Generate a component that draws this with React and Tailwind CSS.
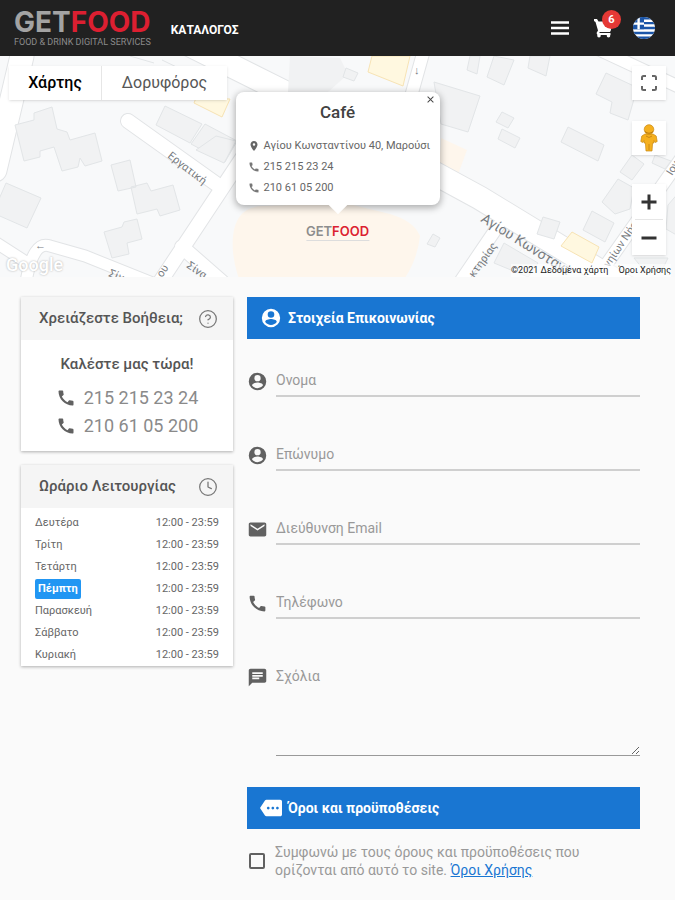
import { Clock, CircleHelp } from 'lucide-react'
import { MdCall, MdChat, MdClose, MdEmail, MdMore, MdPlace } from 'react-icons/md'

const AccountIcon = ({ size }) => (
  <svg viewBox="0 0 24 24" width={size} height={size} fill="currentColor" fillRule="evenodd">
    <path d="M12 2a10 10 0 1 1 0 20 10 10 0 0 1 0-20zM12 4.600a3.600 3.600 0 1 0 0 7.200 3.600 3.600 0 0 0 0-7.200zM12 13.200c-2.300 0-6.300 1-6.300 3.200 1.400 1.900 3.700 3.200 6.300 3.200s4.900-1.300 6.300-3.200c0-2.200-4-3.200-6.300-3.200z" />
  </svg>
)

const phones = ['215 215 23 24', '210 61 05 200']

const days = ['Δευτέρα', 'Τρίτη', 'Τετάρτη', 'Πέμπτη', 'Παρασκευή', 'Σάββατο', 'Κυριακή']
const today = 'Πέμπτη'

const fields = [
  { id: 'firstName', label: 'Ονομα', type: 'text', Icon: AccountIcon },
  { id: 'lastName', label: 'Επώνυμο', type: 'text', Icon: AccountIcon },
  { id: 'email', label: 'Διεύθυνση Email', type: 'email', Icon: MdEmail },
  { id: 'phone', label: 'Τηλέφωνο', type: 'tel', Icon: MdCall },
]

const MenuIcon = () => (
  <svg viewBox="0 0 18 14" className="h-[14px] w-[18px]" stroke="currentColor" strokeWidth="2.600">
    <path d="M0 1.500h18M0 7h18M0 12.500h18" />
  </svg>
)

const CartIcon = () => (
  <svg viewBox="0 0 20 20" className="h-5 w-5 text-white" fill="currentColor">
    <path d="M1 1h3l1.5 2.5H18v8.5l-1 2H7l-1 1h11.500v2H4.500L3.500 15l1.500-2.500L2.500 4 1 3z" />
    <circle cx="6" cy="17.800" r="1.800" />
    <circle cx="15.500" cy="17.800" r="1.800" />
  </svg>
)

const GreekFlag = () => (
  <svg viewBox="0 0 22 22" className="h-[22px] w-[22px]">
    <clipPath id="flag">
      <circle cx="11" cy="11" r="11" />
    </clipPath>
    <g clipPath="url(#flag)">
      <rect width="22" height="22" fill="#fff" />
      <path
        d="M0 1.200h22M0 6.100h22M0 11h22M0 15.900h22M0 20.800h22"
        stroke="#1b55a8"
        strokeWidth="2.450"
      />
      <rect width="11" height="12.200" fill="#1b55a8" />
      <path d="M0 6.600h11M5.600 0v12.200" stroke="#fff" strokeWidth="2.400" />
    </g>
  </svg>
)

const Pegman = () => (
  <svg viewBox="0 0 18 28" className="h-7 w-[18px]">
    <path
      d="M5 10h8l3.200 2 1 5.500-2 1-1.200-2v2.500h-1.400L12 27H6l-.600-8H4v-2.500l-1.200 2-2-1 1-5.500z"
      fill="#f5b01f"
      stroke="#c98a16"
      strokeWidth=".7"
    />
    <path d="M6 12l3 1.500 3-1.500M9 20v6" fill="none" stroke="#c98a16" />
    <circle cx="9" cy="5.500" r="4.800" fill="#f5b01f" stroke="#c98a16" strokeWidth=".7" />
    <path d="M5 7.500q4 3.500 8 0" fill="none" stroke="#b87c12" />
  </svg>
)

const MapDrawing = () => (
  <svg
    viewBox="0 56 675 221"
    preserveAspectRatio="xMidYMid slice"
    className="absolute inset-0 h-full w-full"
    fontFamily="Roboto, sans-serif"
  >
    <rect y="56" width="675" height="221" fill="#f8f9fa" />

    {/* business area */}
    <path
      d="M233 236Q236 207 262 206L345 203 390 214Q414 221 420 236Q417 262 402 282H240Q231 258 233 236z"
      fill="#fef6ec"
    />
    <path d="M441 138l26 12-10 27-18-8z" fill="#fef6ec" />

    {/* streets */}
    <g fill="none" stroke="#e2e4e6" strokeLinecap="round">
      <path d="M-5 170L22 56M180 40L296 98 480 198 690 326" strokeWidth="25" />
      <path d="M128 121L222 188M266 122L160 282M182 247L222 282" strokeWidth="16" />
      <path d="M26 282Q33 240 50 246L85 256 170 290M-5 242L26 262" strokeWidth="13" />
      <path d="M424 50L410 100M498 226L460 282M680 160L594 282M600 50L690 92" strokeWidth="14" />
    </g>
    <g fill="none" stroke="#fff" strokeLinecap="round">
      <path d="M-5 170L22 56M180 40L296 98 480 198 690 326" strokeWidth="23" />
      <path d="M128 121L222 188M266 122L160 282M182 247L222 282" strokeWidth="14" />
      <path d="M26 282Q33 240 50 246L85 256 170 290M-5 242L26 262" strokeWidth="11" />
      <path d="M424 50L410 100M498 226L460 282M680 160L594 282M600 50L690 92" strokeWidth="12" />
    </g>

    {/* buildings */}
    <g fill="#f1f2f3" stroke="#e2e5e7">
      <path d="M34 113l18-6 5 22 10 3 3 8 25-7 7 28-17 5-5-8-2 9-16 4-8-24-14 4 0 6-16 4-9-36 19-5z" />
      <path d="M165 106l37 18-12 19-34-18zM205 124l32 17-12 21-34-18z" />
      <path d="M111 165l19-5 6 27-18 4zM131 187l16-4 4 8 22-6 7 25-20 6-3-7-20 5z" />
      <path d="M104 232l18-5 2-5 13-3 5 20-15 4 2 11-17 4z" />
      <path d="M6 183l35 15-14 30-34-15z" />
      <path d="M290 56l50 2 8 16-20 18h-40z" stroke="none" />
      <path d="M346 68l12 5-4 8-11-4zM130 56l24 7M162 60l60 29" />
      <path d="M470 56h10l-3 18-10-4zM494 56l20 4-10 25-17-8zM530 56h20l-4 20-18-8z" />
      <path d="M434 82l46 14-12 36-27-8z" />
      <path d="M502 112l12 6-6 10-12-6zM502 129l18 9-5 10-17-9z" />
      <path d="M606 73l30 14-2 12-6 21-18-7 2-11-16-8z" />
      <path d="M568 127l36 18-6 16-37-19z" />
      <path d="M196 150l20-14 20 5-12 22z" />
      <path d="M632 155l12 9-12 16-12-8zM618 179l16 9-4 21-15 5-13-12z" />
      <path d="M592 211l22 12-9 19-22-12zM543 217l17 5-6 17-17-5z" />
      <path d="M433 234l7 4-5 9-8-3zM504 243l34 20-10 14-34-14z" />
      <path d="M655 155l16 6-6 8-13-6zM668 205l12-14v46l-14-8zM634 258h34l-5 10-16 6z" />
    </g>
    <path d="M372 56h38l-7 30-35-14z" fill="#fff8e0" stroke="#f7e3b4" />
    <path d="M196 98l34 1-8 18-28-14z" fill="#fff8e0" stroke="#f7e3b4" />
    <path d="M572 232l27 15-7 16-31-17z" fill="#fff8e0" stroke="#f7e3b4" />

    {/* street names */}
    <g fill="#777b7f" fontSize="11">
      <text transform="translate(167 157) rotate(38)">Εργατική</text>
      <text x="480" y="221" fontSize="14" transform="rotate(32 480 221)">Αγίου Κωνσταντ</text>
      <text transform="translate(474 278) rotate(-54)">κτηρίας</text>
      <text transform="translate(609 268) rotate(-56)">νηίων Νήσων</text>
      <text transform="translate(672 176) rotate(-58)">Ιον</text>
      <text transform="translate(186 267) rotate(35)">Σίνα</text>
      <text transform="translate(108 276) rotate(22)">Σίνα</text>
      <text transform="translate(162 278) rotate(-55)">ου</text>
      <text x="414" y="74">↓</text>
      <text x="35" y="249">←</text>
    </g>
  </svg>
)

const Header = () => (
  <header className="flex h-14 items-center bg-[#212121] pl-[14px] pr-5">
    <a href="#home" className="whitespace-nowrap">
      <span className="block font-['Inter'] text-[28px] font-bold leading-7 text-[#a3a3a3]">
        GET<span className="text-[#dc1f31]">FOOD</span>
      </span>
      <span className="block text-[9px] leading-3 text-[#8b8b8b]">
        FOOD &amp; DRINK DIGITAL SERVICES
      </span>
    </a>
    <a href="#catalog" className="ml-5 mt-1 text-[12px] font-bold text-white">
      ΚΑΤΑΛΟΓΟΣ
    </a>
    <div className="ml-auto flex items-center gap-5">
      <button aria-label="Μενού" className="mr-1 text-white">
        <MenuIcon />
      </button>
      <button aria-label="Καλάθι" className="relative">
        <CartIcon />
        <span className="absolute -right-2 -top-2 h-[19px] w-[19px] rounded-full bg-[#e53935] text-center text-[11px] font-bold leading-[19px] text-white">
          6
        </span>
      </button>
      <button aria-label="Γλώσσα">
        <GreekFlag />
      </button>
    </div>
  </header>
)

const InfoWindow = () => (
  <div className="absolute left-1/2 top-9 h-[113px] w-[204px] -translate-x-1/2 rounded-lg bg-white px-3 pt-2 shadow-[0_2px_7px_1px_rgba(0,0,0,0.3)]">
    <div className="absolute -bottom-[6px] left-1/2 h-4 w-4 -translate-x-1/2 rotate-45 bg-white" />
    <button aria-label="Κλείσιμο" className="absolute right-1 top-[2px] text-[#444]">
      <MdClose size={11} />
    </button>
    <h2 className="text-center text-[17px] font-medium leading-6 text-[#424242]">Café</h2>
    <ul className="relative mt-[11px] text-[11px] leading-[21px] text-[#666]">
      <li className="flex items-center gap-1 whitespace-nowrap">
        <MdPlace size={12} className="shrink-0" />
        Αγίου Κωνσταντίνου 40, Μαρούσι
      </li>
      {phones.map((phone) => (
        <li key={phone} className="flex items-center gap-1">
          <MdCall size={12} className="text-[#777]" />
          {phone}
        </li>
      ))}
    </ul>
  </div>
)

const StoreMap = () => (
  <section className="relative h-[221px] overflow-hidden">
    <MapDrawing />
    <div className="absolute left-[9px] top-[10px] flex bg-white text-[16px] leading-[34px] shadow">
      <button className="w-[93px] border-r border-[#e6e6e6] font-medium text-black">Χάρτης</button>
      <button className="w-[125px] text-[#565656]">Δορυφόρος</button>
    </div>
    <InfoWindow />
    <div className="absolute left-1/2 top-[166px] -translate-x-1/2 border-b border-[#ddd] font-['Inter'] text-[13px] font-semibold leading-[18px] text-[#8d8d8d]">
      GET<span className="text-[#dc1f31]">FOOD</span>
    </div>
    <div className="absolute right-[9px] top-[10px] flex flex-col text-[#666]">
      <button
        aria-label="Πλήρης οθόνη"
        className="flex h-[34px] w-[34px] items-center justify-center bg-white shadow"
      >
        <svg viewBox="0 0 16 16" className="h-4 w-4" fill="none" stroke="currentColor" strokeWidth="2">
          <path d="M1 5V2.500Q1 1 2.500 1H5M11 1h2.500Q15 1 15 2.500V5M15 11v2.500q0 1.500-1.500 1.500H11M5 15H2.500Q1 15 1 13.500V11" />
        </svg>
      </button>
      <button
        aria-label="Street View"
        className="mt-[21px] flex h-[34px] w-[34px] items-center justify-center bg-white shadow"
      >
        <Pegman />
      </button>
      <div className="mt-[29px] flex flex-col items-center bg-white text-[#333] shadow">
        <button aria-label="Μεγέθυνση" className="flex h-[35px] w-[34px] items-center justify-center">
          <svg viewBox="0 0 16 16" className="h-4 w-4" stroke="currentColor" strokeWidth="3">
            <path d="M0.500 8h15M8 0.500v15" />
          </svg>
        </button>
        <span className="h-px w-7 bg-[#e6e6e6]" />
        <button aria-label="Σμίκρυνση" className="flex h-[35px] w-[34px] items-center justify-center">
          <svg viewBox="0 0 16 16" className="h-4 w-4" stroke="currentColor" strokeWidth="3">
            <path d="M0.500 8h15" />
          </svg>
        </button>
      </div>
    </div>
    <span className="absolute bottom-0 left-[6px] text-[18px] font-medium leading-6 text-white [text-shadow:0_0_2px_#aaa]">
      Google
    </span>
    <div className="absolute bottom-0 right-1 flex gap-[10px] bg-white/60 text-[9px] leading-[13px] text-[#222]">
      <span>©2021 Δεδομένα χάρτη</span>
      <a href="#map-terms">Όροι Χρήσης</a>
    </div>
  </section>
)

const Card = ({ title, Icon, children }) => (
  <section className="bg-white shadow-[0_1px_3px_rgba(0,0,0,0.3)]">
    <div className="flex h-[43px] items-center justify-between bg-[#f5f5f5] pl-[18px] pr-[15px] text-[#555]">
      <h3 className="whitespace-nowrap text-[15px] font-medium">{title}</h3>
      <Icon size={20} strokeWidth={1.5} className="text-[#777]" />
    </div>
    {children}
  </section>
)

const Banner = ({ title, Icon }) => (
  <h2 className="flex h-[42px] items-center gap-[6px] bg-[#1976d2] pl-[13px] text-[14px] font-bold text-white">
    <Icon size={22} />
    {title}
  </h2>
)

const Sidebar = () => (
  <aside className="flex flex-col gap-[14px]">
    <Card title="Χρειάζεστε Βοήθεια;" Icon={CircleHelp}>
      <div className="flex flex-col items-center pb-[11px] pt-3">
        <p className="text-[15px] font-medium leading-6 text-[#555]">Καλέστε μας τώρα!</p>
        <ul className="mt-2 text-[18px] leading-7 text-[#8a8a8a]">
          {phones.map((phone) => (
            <li key={phone}>
              <a href={`tel:${phone}`} className="flex items-center gap-2">
                <MdCall size={20} className="text-[#616161]" />
                {phone}
              </a>
            </li>
          ))}
        </ul>
      </div>
    </Card>
    <Card title="Ωράριο Λειτουργίας" Icon={Clock}>
      <table className="mx-[14px] w-[calc(100%-28px)] text-[11px] text-[#666]">
        <tbody>
          <tr className="h-1" />
          {days.map((day) => (
            <tr key={day} className="h-[22px]">
              <td className="p-0">
                {day === today ? (
                  <span className="block w-fit rounded-xs bg-[#2196f3] px-[3px] font-bold leading-5 text-white">
                    {day}
                  </span>
                ) : (
                  day
                )}
              </td>
              <td className="p-0 text-right">12:00 - 23:59</td>
            </tr>
          ))}
        </tbody>
      </table>
    </Card>
  </aside>
)

const ContactForm = () => (
  <form>
    <Banner title="Στοιχεία Επικοινωνίας" Icon={AccountIcon} />
    <div className="mt-[26px] flex flex-col gap-[42px]">
      {fields.map(({ id, label, type, Icon }) => (
        <div key={id} className="flex items-center gap-2">
          <label htmlFor={id} aria-label={label} className="text-[#616161]">
            <Icon size={21} />
          </label>
          <input
            id={id}
            type={type}
            placeholder={label}
            className="h-8 min-w-0 flex-1 border-b-2 border-[#cfcfcf] text-[14px] outline-none placeholder:text-[#999]"
          />
        </div>
      ))}
      <div className="flex items-start gap-2">
        <label htmlFor="comments" aria-label="Σχόλια" className="pt-[6px] text-[#616161]">
          <MdChat size={21} />
        </label>
        <textarea
          id="comments"
          placeholder="Σχόλια"
          className="h-[95px] min-w-0 flex-1 border-b border-[#999] pt-[5px] text-[14px] outline-none placeholder:text-[#999]"
        />
      </div>
    </div>
    <div className="mt-[31px]">
      <Banner title="Όροι και προϋποθέσεις" Icon={MdMore} />
    </div>
    <div className="mt-[14px] flex items-center gap-[10px] pl-[2px]">
      <input
        id="terms"
        type="checkbox"
        className="h-4 w-4 shrink-0 appearance-none rounded-xs border-2 border-[#616161] checked:bg-[#1976d2]"
      />
      <label htmlFor="terms" className="max-w-[320px] text-[14px] leading-[18px] text-[#999]">
        Συμφωνώ με τους όρους και προϋποθέσεις που ορίζονται από αυτό το site.{' '}
        <a href="#terms-of-use" className="text-[#1976d2] underline">
          Όροι Χρήσης
        </a>
      </label>
    </div>
  </form>
)

const App = () => {
  return (
    <div className="min-h-screen bg-[#fafafa] font-['Roboto',sans-serif]">
      <Header />
      <StoreMap />
      <main className="grid grid-cols-[212px_1fr] items-start gap-[14px] pb-5 pl-[21px] pr-[35px] pt-5">
        <Sidebar />
        <ContactForm />
      </main>
    </div>
  )
}

export default App
